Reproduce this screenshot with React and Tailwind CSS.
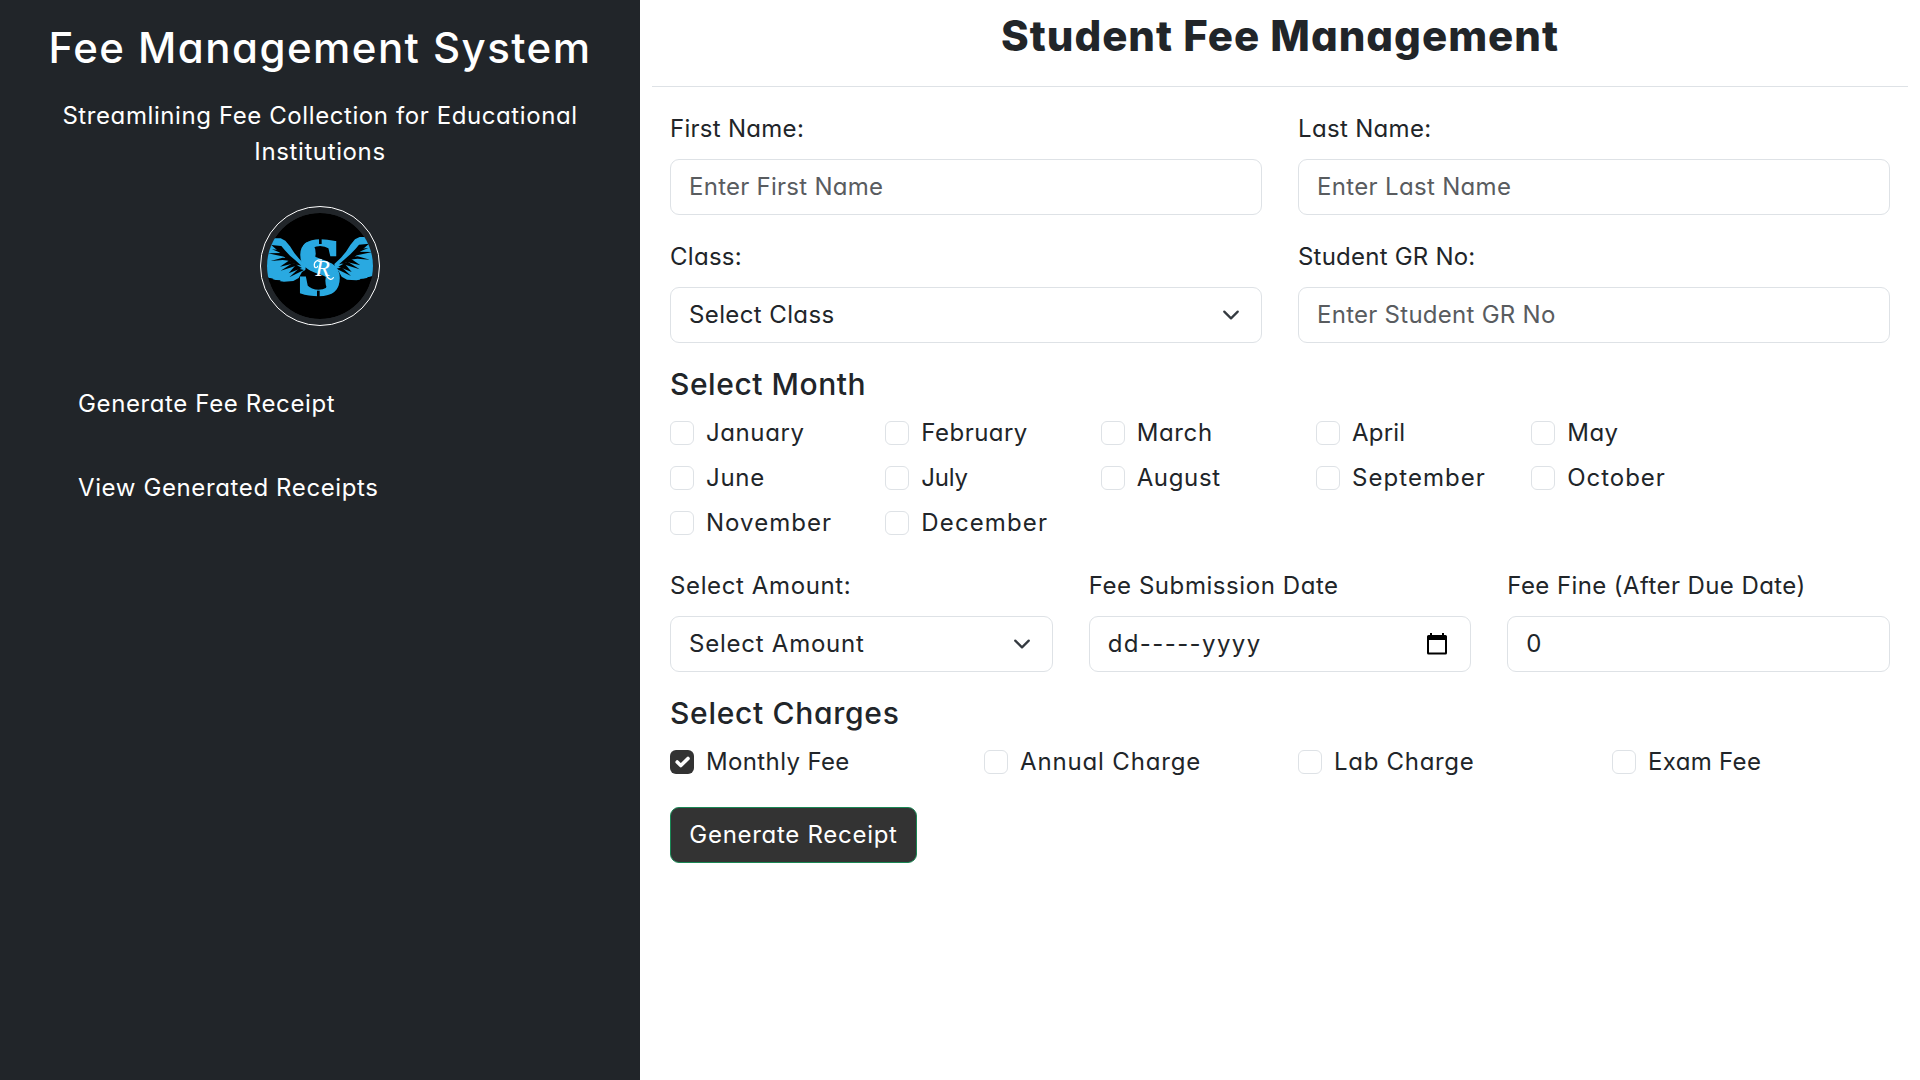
const MONTHS = [
  ["January", "tracking-[0.6px]"],
  ["February", "tracking-[0.47px]"],
  ["March", "tracking-[0.65px]"],
  ["April", "tracking-[0.2px]"],
  ["May", "tracking-[0.45px]"],
  ["June", "tracking-[0.7px]"],
  ["July", "tracking-[-0.2px]"],
  ["August", "tracking-[0.65px]"],
  ["September", "tracking-[1.05px]"],
  ["October", "tracking-[0.95px]"],
  ["November", "tracking-[1.04px]"],
  ["December", "tracking-[1.13px]"],
];

const CHARGES = [
  ["Monthly Fee", "tracking-[0.37px]", true],
  ["Annual Charge", "tracking-[0.85px]", false],
  ["Lab Charge", "tracking-[0.7px]", false],
  ["Exam Fee", "tracking-[0.32px]", false],
];

function Wing() {
  return (
    <g>
      <path
        d="M70 152 L102 145 L122 145 L136 152 L150 169 L163 189 L178 207 L198 226 L196 240 L186 246 L176 264 L160 273 L132 275 L112 272 L70 258 Z"
        fill="#29a9e1"
      />
      <g fill="#000">
        <path d="M94 165 L124 168 L134 180 L150 197 L166 211 L184 227 L166 223 L142 210 L122 190 Z" />
        <path d="M96 178 L126 181 L130 192 Z" />
        <path d="M84 190 L126 189 L140 202 Z" />
        <path d="M92 213 L128 203 L150 205 L160 214 L128 210 Z" />
        <path d="M120 230 L146 212 L170 218 Z" />
        <path d="M122 242 L158 219 L176 225 Z" />
        <path d="M146 250 L168 224 L186 234 Z" />
        <path d="M148 262 L176 236 L192 240 Z" />
        <path d="M76 262 L100 266 L96 269 L122 271 L116 278 L76 278 Z" />
      </g>
    </g>
  );
}

function Logo() {
  return (
    <svg viewBox="60 48 360 360" className="h-[120px] w-[120px]">
      <defs>
        <clipPath id="disc">
          <circle cx="240" cy="228" r="159" />
        </clipPath>
      </defs>
      <circle cx="240" cy="228" r="178.5" fill="none" stroke="#fff" strokeWidth="3" />
      <g clipPath="url(#disc)">
        <circle cx="240" cy="228" r="159" fill="#000" />
        <Wing />
        <g transform="translate(481 -4) scale(-1 1)">
          <Wing />
        </g>
        <text
          x="238"
          y="313"
          textAnchor="middle"
          fontFamily="Liberation Serif, serif"
          fontWeight="700"
          fontSize="242"
          fill="#29a9e1"
          stroke="#29a9e1"
          strokeWidth="8"
        >
          S
        </text>
        <ellipse cx="206" cy="190" rx="21" ry="34" fill="#29a9e1" />
        <ellipse cx="276" cy="272" rx="20" ry="34" fill="#29a9e1" />
        <rect x="237" y="138" width="8" height="24" fill="#000" />
        <rect x="231" y="302" width="8" height="24" fill="#000" />
        <text
          x="248"
          y="258"
          textAnchor="middle"
          fontFamily="Liberation Serif, serif"
          fontStyle="italic"
          fontSize="72"
          fill="#fff"
        >
          R
        </text>
        <path
          d="M246 210 C232 208 221 216 223 228 C225 236 233 234 233 227 M258 252 C264 270 276 272 281 262"
          fill="none"
          stroke="#fff"
          strokeWidth="3.5"
        />
      </g>
    </svg>
  );
}

function Chevron() {
  return (
    <svg viewBox="0 0 16 16" className="mr-[3px] h-[18px] w-[18px] shrink-0" fill="none">
      <path d="m2 5 6 6 6-6" stroke="#343a40" strokeWidth="2" strokeLinecap="round" strokeLinejoin="round" />
    </svg>
  );
}

function CalendarIcon() {
  return (
    <svg viewBox="0 0 20 22" className="mr-[5px] h-[22px] w-5 shrink-0" fill="#000">
      <path
        d="M3 0h2v2h10V0h2v2h1.500q1.500 0 1.500 1.500V20q0 1.500-1.500 1.500h-17Q0 21.500 0 20V3.500Q0 2 1.500 2H3ZM2 7v12.500h16V7Z"
        fillRule="evenodd"
      />
    </svg>
  );
}

function Field({ label, labelTracking, value, tracking, muted, icon }) {
  return (
    <div>
      <div className={`mb-3 h-9 leading-9 ${labelTracking}`}>{label}</div>
      <div className="flex h-14 items-center justify-between rounded-[9px] border border-[#dee2e6] bg-white px-[18px]">
        <span className={`${tracking} ${muted ? "text-[#595c5f]" : ""}`}>{value}</span>
        {icon}
      </div>
    </div>
  );
}

function Check({ label, tracking, checked }) {
  return (
    <div className="flex h-9 items-center gap-3">
      {checked ? (
        <span className="flex h-6 w-6 shrink-0 items-center justify-center rounded-md bg-[#333333]">
          <svg viewBox="0 0 20 20" className="h-6 w-6" fill="none">
            <path d="m6 10 3 3 6-6" stroke="#fff" strokeWidth="3" strokeLinecap="round" strokeLinejoin="round" />
          </svg>
        </span>
      ) : (
        <span className="h-6 w-6 shrink-0 rounded-md border border-[#dee2e6] bg-white" />
      )}
      <span className={tracking}>{label}</span>
    </div>
  );
}

export default function App() {
  return (
    <div className="flex h-[1080px] w-[1920px] overflow-hidden bg-white font-[Inter,sans-serif] text-2xl leading-9 whitespace-nowrap text-[#212529] [font-feature-settings:'cv11']">
      <aside className="flex w-[640px] shrink-0 flex-col bg-[#212529] pt-[23px] text-white">
        <h1 className="text-center text-[42px] leading-[50px] font-medium tracking-[1.45px]">
          Fee Management System
        </h1>
        <p className="mt-[25px] text-center">
          <span className="tracking-[0.59px]">Streamlining Fee Collection for Educational</span>
          <br />
          <span className="tracking-[0.62px]">Institutions</span>
        </p>
        <div className="mt-9 flex justify-center">
          <Logo />
        </div>
        <nav className="mt-[60px] flex flex-col gap-12 pl-[78px]">
          <a className="tracking-[0.62px]">Generate Fee Receipt</a>
          <a className="tracking-[0.62px]">View Generated Receipts</a>
        </nav>
      </aside>

      <main className="flex-1 px-3 pt-[11px]">
        <h2 className="text-center text-[42px] leading-[50px] font-extrabold tracking-[0.98px]">
          Student Fee Management
        </h2>
        <hr className="mt-[25px] border-t border-[#dee2e6]" />

        <form className="px-[18px] pt-6">
          <div className="grid grid-cols-2 gap-x-9 gap-y-6">
            <Field label="First Name:" labelTracking="tracking-[0.28px]" value="Enter First Name" tracking="tracking-[0.26px]" muted />
            <Field label="Last Name:" labelTracking="tracking-[0.32px]" value="Enter Last Name" tracking="tracking-[0.33px]" muted />
            <Field label="Class:" labelTracking="tracking-[0.28px]" value="Select Class" tracking="tracking-[0.39px]" icon={<Chevron />} />
            <Field label="Student GR No:" labelTracking="tracking-[0.22px]" value="Enter Student GR No" tracking="tracking-[0.27px]" muted />
          </div>

          <h3 className="mt-[23px] mb-[13px] text-[30px] leading-9 font-medium tracking-[0.55px]">Select Month</h3>
          <div className="grid grid-cols-[repeat(5,215.33px)] gap-y-[9px]">
            {MONTHS.map(([name, tracking]) => (
              <Check key={name} label={name} tracking={tracking} />
            ))}
          </div>

          <div className="mt-[27px] grid grid-cols-3 gap-x-9">
            <Field label="Select Amount:" labelTracking="tracking-[0.62px]" value="Select Amount" tracking="tracking-[0.76px]" icon={<Chevron />} />
            <Field label="Fee Submission Date" labelTracking="tracking-[0.57px]" value="dd-----yyyy" tracking="tracking-[1.4px]" icon={<CalendarIcon />} />
            <Field label="Fee Fine (After Due Date)" labelTracking="tracking-[0.41px]" value="0" tracking="tracking-normal" />
          </div>

          <h3 className="mt-[23px] mb-[13px] text-[30px] leading-9 font-medium tracking-[0.7px]">Select Charges</h3>
          <div className="grid grid-cols-4 gap-x-9">
            {CHARGES.map(([name, tracking, checked]) => (
              <Check key={name} label={name} tracking={tracking} checked={checked} />
            ))}
          </div>

          <button
            type="button"
            className="mt-[27px] flex h-14 w-[247px] items-center justify-center rounded-[9px] border border-[#198754] bg-[#333333] tracking-[0.71px] text-white"
          >
            Generate Receipt
          </button>
        </form>
      </main>
    </div>
  );
}
